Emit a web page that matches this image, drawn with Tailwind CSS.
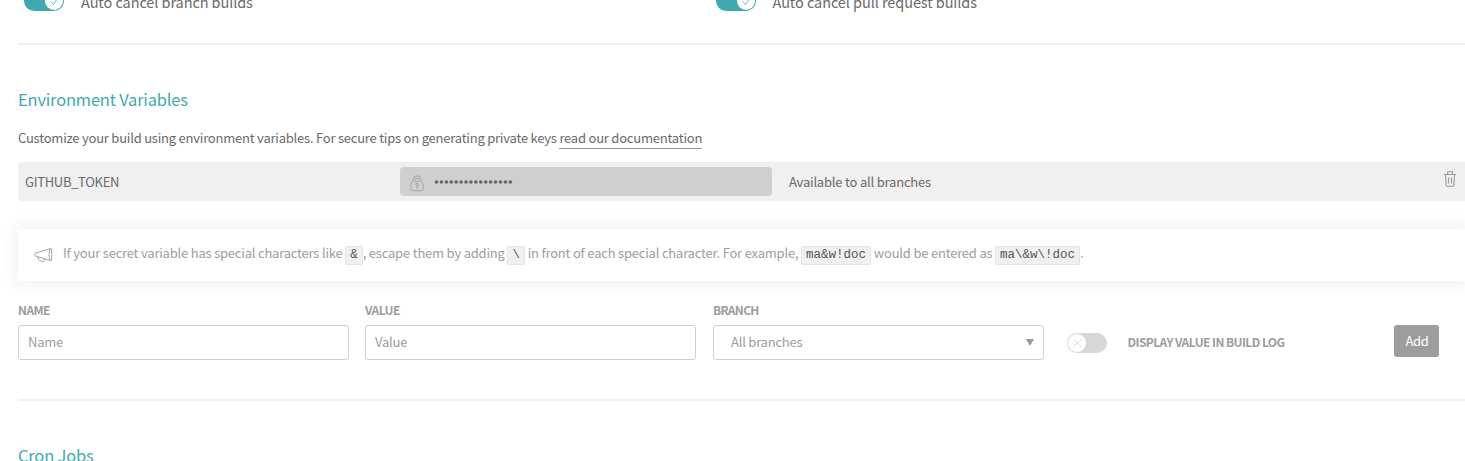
<!DOCTYPE html>
<html lang="en">
<head>
<meta charset="utf-8">
<title>Settings</title>
<script src="https://cdn.jsdelivr.net/npm/@tailwindcss/browser@4"></script>
</head>
<body class="h-[461px] overflow-hidden bg-white pl-[18px] font-['Noto_Sans_CJK_JP',sans-serif] text-[13px] leading-5 tracking-[-0.22px] text-[#6a6a6a]">
  <section class="flex h-[43px] overflow-hidden pl-1.5 text-[14.5px] tracking-[-0.08px]">
    <div class="-mt-[9px] flex w-[692px] items-start">
      <svg class="mr-[17px] h-5 w-10 shrink-0" viewBox="0 0 40 20"><rect width="40" height="20" rx="10" fill="#3eaaaf"/><circle cx="30" cy="10" r="9" fill="#fff"/><path d="M26.5 10.5l3 3 4.5-7" fill="none" stroke="#3eaaaf" stroke-width=".8"/></svg>
      <span class="mt-px">Auto cancel branch builds</span>
    </div>
    <div class="-mt-[9px] flex items-start">
      <svg class="mr-[16.5px] h-5 w-10 shrink-0" viewBox="0 0 40 20"><rect width="40" height="20" rx="10" fill="#3eaaaf"/><circle cx="30" cy="10" r="9" fill="#fff"/><path d="M26.5 10.5l3 3 4.5-7" fill="none" stroke="#3eaaaf" stroke-width=".8"/></svg>
      <span class="mt-px">Auto cancel pull request builds</span>
    </div>
  </section>
  <section class="h-[356px] border-t-2 border-[#f0f0f0] pt-[43px]">
    <h2 class="h-[22px] text-[16.5px] leading-[22px] tracking-[-0.2px] text-[#3eaaaf]">Environment Variables</h2>
    <p class="mt-[18px] h-5 whitespace-nowrap">Customize your build using environment variables. For secure tips on generating private keys <a class="inline-block h-[21px] border-b border-[#999]">read our documentation</a></p>
    <div class="mt-[14px] flex h-[39px] items-center rounded-l-sm bg-[#f0f0f0] pl-[7px]">
      <span class="w-[375px] tracking-[-0.3px]">GITHUB_TOKEN</span>
      <div class="flex h-[29px] w-[372px] items-center rounded-sm bg-[#cfcfcf] pl-[10px]">
        <svg class="mt-[3px] mr-[10px] h-[17px] w-[14px]" viewBox="0 0 14 17" fill="none" stroke="#a5a5a5"><path d="M3 7V4.8a4 4 0 0 1 8 0V7M3 6.8Q.8 7.8.8 9.5V14q0 1.7 1.7 1.7h9q1.7 0 1.7-1.7V9.5q0-1.7-2.2-2.7"/><circle cx="7" cy="5" r="1.9"/><circle cx="7" cy="9.5" r="1.2"/><path d="M7 10.5v3.5"/></svg>
        <svg class="h-1 w-20" viewBox="0 0 80 4"><path d="M2.5 2h77" stroke="#666" stroke-width="3.6" stroke-linecap="round" stroke-dasharray="0 4.92"/></svg>
      </div>
      <span class="ml-[17px] tracking-[-0.2px]">Available to all branches</span>
      <svg class="mr-[9px] mb-[6px] ml-auto h-4 w-3" viewBox="0 0 12 16" fill="none" stroke="#999" stroke-width="1.1"><path d="M0 3.5h12M3.5 3V1.7q0-.9.9-.9h3.2q.9 0 .9.9V3M1.5 4l.6 10q.1 1.3 1.3 1.3h5.2q1.2 0 1.3-1.3l.6-10M4.5 6.5v6M7.5 6.5v6"/></svg>
    </div>
    <div class="mt-7 flex h-[52px] items-center bg-white pl-4 text-[#9d9d9d] shadow-[0_0_15px_2px_rgba(0,0,0,0.07)]">
      <svg class="mr-[10px] h-[15px] w-[19px]" viewBox="0 0 19 15" fill="none" stroke="#999" stroke-width=".9"><path d="M15.8.8L1.2 5.2Q.2 5.700.6 6.700t1.200 1.500L15.8 12.400M15.800.8q-1.600 5.800 0 11.600M15.800.8h1.600q1 5.800 0 11.600h-1.600M4.200 9l.3 2.300q.2.8 1 1l3 1.400q.9.3 1.200-.6l1-2"/></svg>
      <p class="mb-0.5 whitespace-nowrap tracking-[-0.205px]">If your secret variable has special characters like <code class="rounded-xs border border-[#e4e4e4] bg-[#f0f0f0] px-1 pt-px pb-0.5 font-['Liberation_Mono',monospace] text-[12.5px] tracking-normal text-[#555]">&amp;</code>, escape them by adding <code class="rounded-xs border border-[#e4e4e4] bg-[#f0f0f0] px-1 pt-px pb-0.5 font-['Liberation_Mono',monospace] text-[12.5px] tracking-normal text-[#555]">\</code> in front of each special character. For example, <code class="rounded-xs border border-[#e4e4e4] bg-[#f0f0f0] px-1 pt-px pb-0.5 font-['Liberation_Mono',monospace] text-[12.5px] tracking-normal text-[#555]">ma&amp;w!doc</code> would be entered as <code class="rounded-xs border border-[#e4e4e4] bg-[#f0f0f0] px-1 pt-px pb-0.5 font-['Liberation_Mono',monospace] text-[12.5px] tracking-normal text-[#555]">ma\&amp;w\!doc</code>.</p>
    </div>
    <form class="mt-[19px] flex text-[#9d9d9d]">
      <label class="mr-4 w-[331px]"><span class="block h-[25px] text-[12px] font-bold tracking-[-0.6px]">NAME</span><input class="block h-[35px] w-full rounded-[3px] border border-[#cfcfcf] px-[9px] pb-0.5 tracking-[-0.22px] placeholder:text-[#9d9d9d]" placeholder="Name"></label>
      <label class="mr-[17px] w-[331px]"><span class="block h-[25px] text-[12px] font-bold tracking-[-0.6px]">VALUE</span><input class="block h-[35px] w-full rounded-[3px] border border-[#cfcfcf] px-[9px] pb-0.5 tracking-[-0.22px] placeholder:text-[#9d9d9d]" placeholder="Value"></label>
      <div class="w-[331px]"><span class="block h-[25px] text-[12px] font-bold tracking-[-0.7px]">BRANCH</span><div class="flex h-[35px] items-center justify-between rounded-[3px] border border-[#cfcfcf] pr-[9px] pl-[17px]"><span class="mb-0.5">All branches</span><svg class="h-[7px] w-2" viewBox="0 0 8 7"><path d="M0 0h8L4 7z" fill="#999"/></svg></div></div>
      <svg class="mt-[33px] ml-[23px] h-5 w-10 shrink-0" viewBox="0 0 40 20"><rect width="40" height="20" rx="10" fill="#d8d8d8"/><circle cx="10" cy="10" r="9" fill="#fff"/><path d="M6 6l9 8M15 6l-9 8" stroke="#ddd" stroke-width="1"/></svg>
      <span class="mt-8 ml-[20.5px] w-[266.5px] text-[12px] font-bold tracking-[-0.57px]">DISPLAY VALUE IN BUILD LOG</span>
      <button type="button" class="mt-[25px] h-8 w-[45px] rounded-[3px] bg-[#9d9d9d] pl-px tracking-[-0.3px] text-white">Add</button>
    </form>
  </section>
  <section class="border-t-2 border-[#f0f0f0] pt-[43px]">
    <h2 class="text-[16.5px] leading-[22px] tracking-[-0.2px] text-[#3eaaaf]">Cron Jobs</h2>
  </section>
</body>
</html>
